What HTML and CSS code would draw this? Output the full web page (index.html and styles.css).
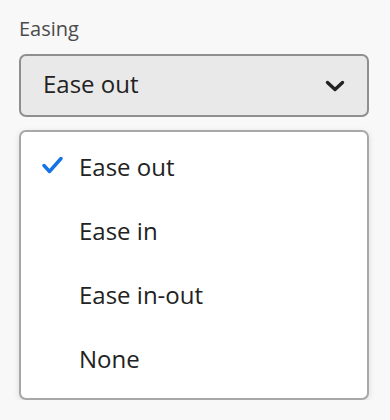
FILE: index.html
```html
<!DOCTYPE html>
<html lang="en">
<head>
    <meta charset="UTF-8">
    <meta name="viewport" content="width=device-width, initial-scale=1.0">
    <title>Easing picker</title>
    <link rel="stylesheet" href="styles.css">
</head>
<body>
    <div class="field">
        <label class="field-label">Easing</label>

        <button class="picker">
            <span class="picker-value">Ease out</span>
            <svg class="chevron" width="22" height="14" viewBox="0 0 22 14">
                <path d="M3.5 3.5 L11 10.5 L18.5 3.5" fill="none" stroke="#222" stroke-width="3.4" stroke-linecap="round" stroke-linejoin="round"/>
            </svg>
        </button>

        <ul class="menu">
            <li class="menu-item selected">
                <span class="check-slot">
                    <svg width="22" height="20" viewBox="0 0 22 20">
                        <path d="M3 9.5 L8.5 15.5 L20 2.5" fill="none" stroke="#1473e6" stroke-width="3.4" stroke-linecap="round" stroke-linejoin="round"/>
                    </svg>
                </span>
                <span>Ease out</span>
            </li>
            <li class="menu-item"><span class="check-slot"></span><span>Ease in</span></li>
            <li class="menu-item"><span class="check-slot"></span><span>Ease in-out</span></li>
            <li class="menu-item"><span class="check-slot"></span><span>None</span></li>
        </ul>
    </div>
</body>
</html>
```

FILE: styles.css
```css
body {
    margin: 0;
    background: #f8f8f8;
    font-family: "Open Sans", sans-serif;
    color: #222;
}

.field {
    padding: 16px 19px 0 19px;
    width: 350px;
}

.field-label {
    display: block;
    font-size: 20px;
    color: #4b4b4b;
    line-height: 25px;
    margin-bottom: 13px;
}

.picker {
    box-sizing: border-box;
    width: 350px;
    height: 63px;
    display: flex;
    align-items: center;
    justify-content: space-between;
    padding: 0 21px 4px 22px;
    background: #e9e9e9;
    border: 2px solid #8f8f8f;
    border-radius: 7px;
    font-family: inherit;
    font-size: 24px;
    color: #222;
}

.chevron {
    display: block;
    margin-top: 4px;
}

.menu {
    box-sizing: border-box;
    list-style: none;
    margin: 13px 0 0 0;
    padding: 2px 0 8px 0;
    width: 350px;
    background: #fff;
    border: 2px solid #a8a8a8;
    border-radius: 7px;
    box-shadow: 0 2px 6px rgba(0, 0, 0, 0.12);
}

.menu-item {
    height: 64px;
    display: flex;
    align-items: center;
    gap: 16px;
    padding-left: 20px;
    font-size: 24px;
    color: #222;
}

.check-slot {
    width: 22px;
    height: 20px;
    flex-shrink: 0;
}

.check-slot svg {
    display: block;
}
```
